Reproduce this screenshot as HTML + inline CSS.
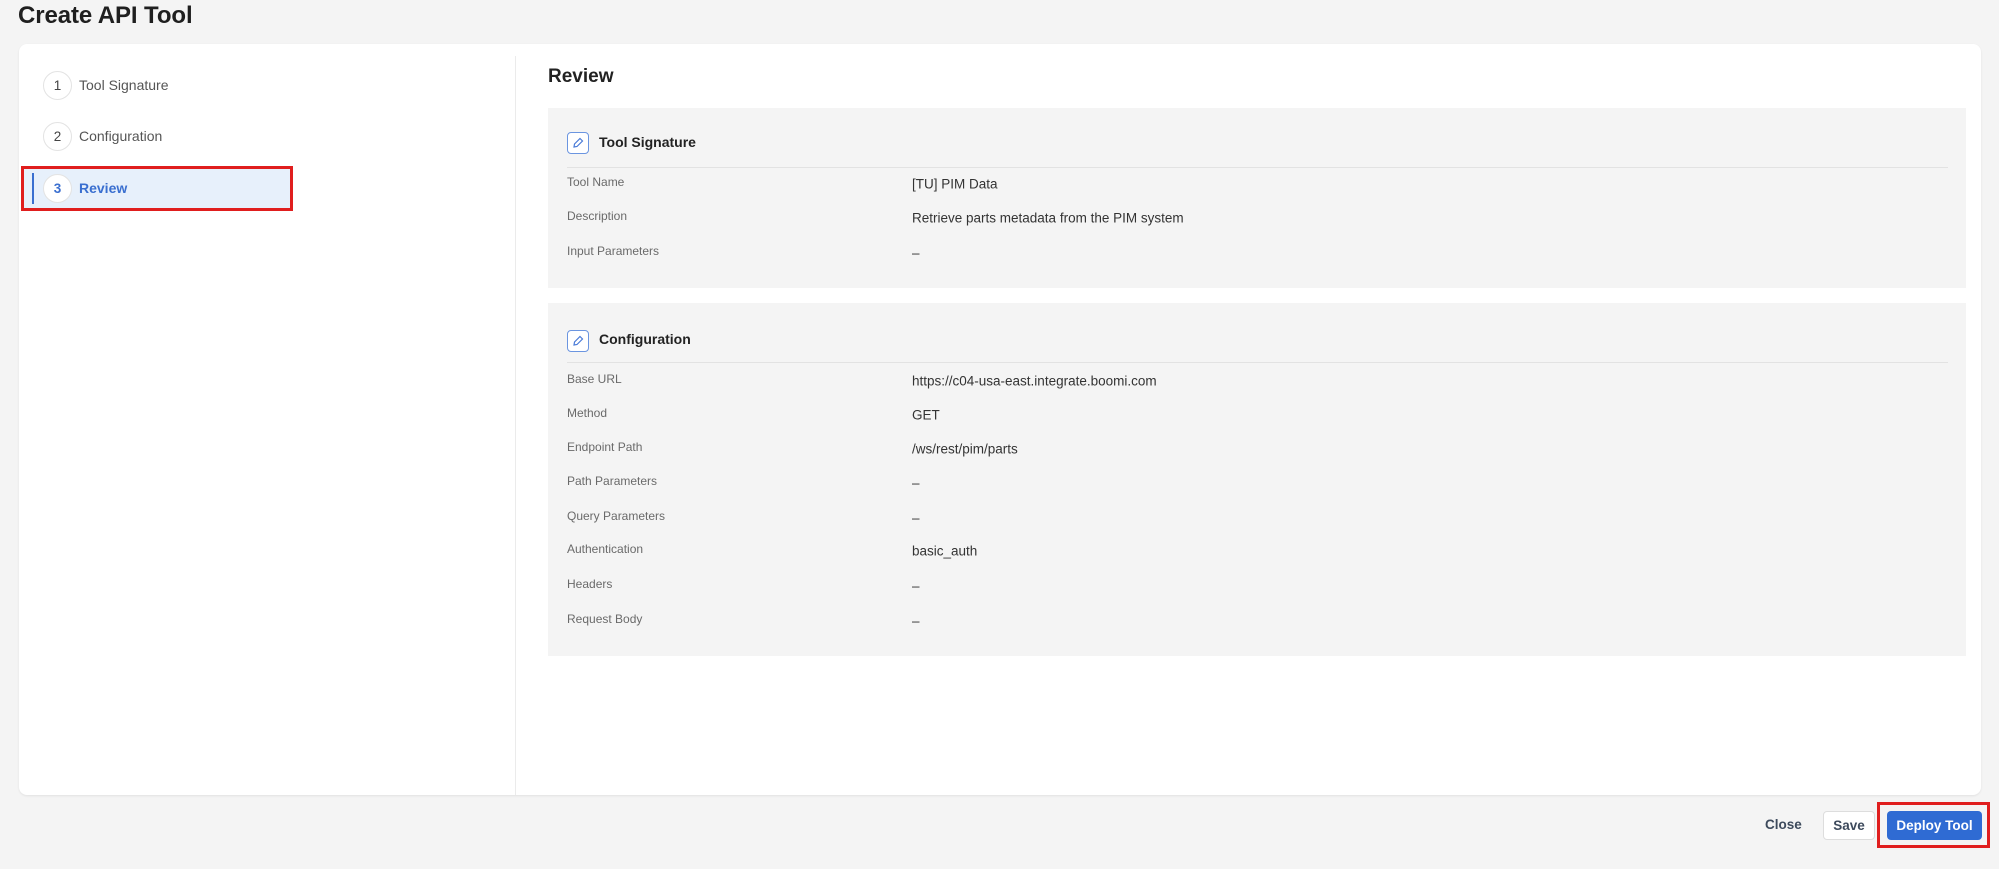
<!DOCTYPE html>
<html><head><meta charset="utf-8"><style>
*{box-sizing:border-box;margin:0;padding:0}
body{width:1999px;height:869px;background:#f4f4f4;font-family:"Liberation Sans",sans-serif;position:relative;overflow:hidden;color:#222}
.abs{position:absolute;white-space:nowrap}
.title{left:18px;top:2px;font-size:24px;font-weight:bold;color:#1f1f1f;letter-spacing:-0.1px}
.card{left:19px;top:44px;width:1962px;height:751px;background:#fff;border-radius:8px;box-shadow:0 1px 2px rgba(0,0,0,0.08)}
.div{left:515px;top:56px;width:1px;height:739px;background:#ebebeb}
.circ{width:29px;height:29px;border:1.5px solid #e3e3e3;border-radius:50%;background:#fff;font-size:13.5px;color:#444;display:flex;align-items:center;justify-content:center}
.step{font-size:14px;color:#555}
.panel{left:548px;width:1418px;background:#f4f4f4}
.ico{width:22px;height:22px;border:1.5px solid #6b95e0;border-radius:4px;background:#fff;display:flex;align-items:center;justify-content:center}
.ph{font-size:14px;font-weight:bold;color:#222}
.sep{left:567px;width:1381px;height:1px;background:#e2e2e2}
.lab{left:567px;font-size:12px;color:#6a6a6a;transform:translateY(-50%)}
.val{left:912px;font-size:13.5px;color:#333;transform:translateY(-50%)}
</style></head><body>
<div class="abs title">Create API Tool</div>
<div class="abs card"></div>
<div class="abs div"></div>

<div class="abs circ" style="left:43px;top:71px">1</div>
<div class="abs step" style="left:79px;top:77px">Tool Signature</div>
<div class="abs circ" style="left:43px;top:122px">2</div>
<div class="abs step" style="left:79px;top:128px">Configuration</div>
<div class="abs" style="left:21px;top:166px;width:272px;height:45px;border:3px solid #e01e1e;background:#e7f0fb"></div>
<div class="abs" style="left:32px;top:173px;width:2px;height:31px;background:#3a6fd0"></div>
<div class="abs circ" style="left:43px;top:174px;color:#3a6fd0;font-weight:bold">3</div>
<div class="abs step" style="left:79px;top:180px;color:#3a6fd0;font-weight:bold">Review</div>

<div class="abs" style="left:548px;top:66px;font-size:19px;font-weight:bold;color:#222">Review</div>

<div class="abs panel" style="top:108px;height:180px"></div>
<div class="abs ico" style="left:567px;top:132px"><svg width="12" height="12" viewBox="0 0 12 12"><path d="M8 1.5l2.5 2.5-5.5 5.5-3 .5.5-3z" fill="none" stroke="#4a7bd8" stroke-width="1.2"/></svg></div>
<div class="abs ph" style="left:599px;top:134px">Tool Signature</div>
<div class="abs sep" style="top:167px"></div>
<div class="abs lab" style="top:182px">Tool Name</div><div class="abs val" style="top:184px">[TU] PIM Data</div>
<div class="abs lab" style="top:216px">Description</div><div class="abs val" style="top:218px">Retrieve parts metadata from the PIM system</div>
<div class="abs lab" style="top:251px">Input Parameters</div><div class="abs val" style="top:253px">–</div>

<div class="abs panel" style="top:303px;height:353px"></div>
<div class="abs ico" style="left:567px;top:330px"><svg width="12" height="12" viewBox="0 0 12 12"><path d="M8 1.5l2.5 2.5-5.5 5.5-3 .5.5-3z" fill="none" stroke="#4a7bd8" stroke-width="1.2"/></svg></div>
<div class="abs ph" style="left:599px;top:331px">Configuration</div>
<div class="abs sep" style="top:362px"></div>
<div class="abs lab" style="top:379px">Base URL</div><div class="abs val" style="top:381px">https://c04-usa-east.integrate.boomi.com</div>
<div class="abs lab" style="top:413px">Method</div><div class="abs val" style="top:415px">GET</div>
<div class="abs lab" style="top:447px">Endpoint Path</div><div class="abs val" style="top:449px">/ws/rest/pim/parts</div>
<div class="abs lab" style="top:481px">Path Parameters</div><div class="abs val" style="top:483px">–</div>
<div class="abs lab" style="top:516px">Query Parameters</div><div class="abs val" style="top:518px">–</div>
<div class="abs lab" style="top:549px">Authentication</div><div class="abs val" style="top:551px">basic_auth</div>
<div class="abs lab" style="top:584px">Headers</div><div class="abs val" style="top:586px">–</div>
<div class="abs lab" style="top:619px">Request Body</div><div class="abs val" style="top:621px">–</div>

<div class="abs" style="left:1765px;top:817px;font-size:13.5px;font-weight:bold;color:#3d4a5c">Close</div>
<div class="abs" style="left:1823px;top:811px;width:52px;height:29px;border:1px solid #ddd;border-radius:4px;background:#fff;font-size:13.5px;font-weight:bold;color:#3d4a5c;display:flex;align-items:center;justify-content:center">Save</div>
<div class="abs" style="left:1877px;top:802px;width:113px;height:46px;border:3px solid #e01e1e"></div>
<div class="abs" style="left:1887px;top:811px;width:95px;height:29px;border-radius:4px;background:#2f6bd3;font-size:13.5px;font-weight:bold;color:#fff;display:flex;align-items:center;justify-content:center">Deploy Tool</div>
</body></html>
